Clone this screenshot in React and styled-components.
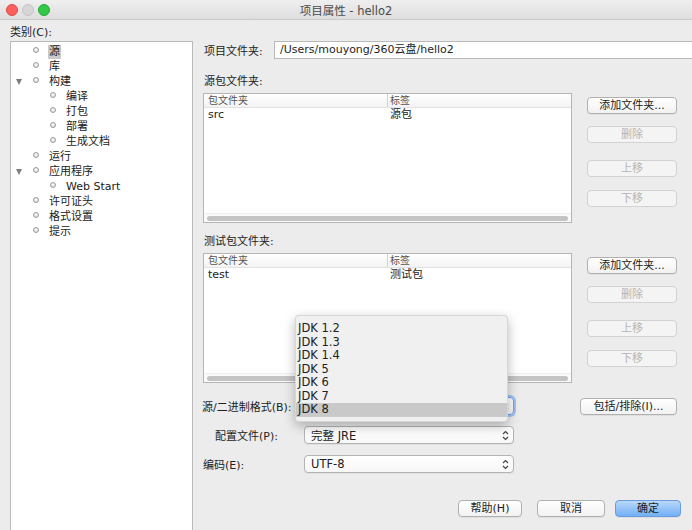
import styled, { createGlobalStyle } from "styled-components";

const FONT = `"DejaVu Sans", "Noto Sans CJK SC", sans-serif`;

const treeItems = [
  { label: "源", level: 0, selected: true },
  { label: "库", level: 0 },
  { label: "构建", level: 0, open: true },
  { label: "编译", level: 1 },
  { label: "打包", level: 1 },
  { label: "部署", level: 1 },
  { label: "生成文档", level: 1 },
  { label: "运行", level: 0 },
  { label: "应用程序", level: 0, open: true },
  { label: "Web Start", level: 1 },
  { label: "许可证头", level: 0 },
  { label: "格式设置", level: 0 },
  { label: "提示", level: 0 },
];

const jdkList = ["JDK 1.2", "JDK 1.3", "JDK 1.4", "JDK 5", "JDK 6", "JDK 7", "JDK 8"];

const sideButtons = [
  { name: "添加文件夹...", mt: 0 },
  { name: "删除", mt: 12, disabled: true },
  { name: "上移", mt: 17, disabled: true },
  { name: "下移", mt: 13, disabled: true },
];

const Arrows = () => (
  <svg width="7" height="11" viewBox="0 0 7 11">
    <path d="M1 4 L3.5 1.5 L6 4" fill="none" stroke="#444" strokeWidth="1.2" />
    <path d="M1 7 L3.5 9.5 L6 7" fill="none" stroke="#444" strokeWidth="1.2" />
  </svg>
);

const FolderSection = ({ title, mt, folder, tag }) => (
  <>
    <SectionLabel $mt={mt}>{title}</SectionLabel>
    <Section>
      <Table>
        <TableHeader>
          <HeaderCell>包文件夹</HeaderCell>
          <HeaderCell>标签</HeaderCell>
        </TableHeader>
        <TableRow>
          <Cell>{folder}</Cell>
          <Cell>{tag}</Cell>
        </TableRow>
        <ScrollTrack>
          <ScrollThumb />
        </ScrollTrack>
      </Table>
      <ButtonColumn>
        {sideButtons.map((b) => (
          <Button key={b.name} $mt={b.mt} disabled={b.disabled}>
            {b.name}
          </Button>
        ))}
      </ButtonColumn>
    </Section>
  </>
);

const App = () => {
  return (
    <>
      <GlobalStyle />
      <Window>
        <TitleBar>
          <Lights>
            <Light $color="#fc605c" $border="#de4a45" />
            <Light $color="#d6d6d6" $border="#c4c4c4" />
            <Light $color="#34c84a" $border="#22a934" />
          </Lights>
          <Title>项目属性 - hello2</Title>
          <span />
        </TitleBar>
        <Body>
          <LeftCol>
            <CategoryLabel>类别(C):</CategoryLabel>
            <TreeBox>
              {treeItems.map((item) => (
                <TreeRow key={item.label} $level={item.level}>
                  <Toggle>{item.open && <Triangle />}</Toggle>
                  <Bullet />
                  <TreeText $selected={item.selected}>{item.label}</TreeText>
                </TreeRow>
              ))}
            </TreeBox>
          </LeftCol>

          <RightCol>
            <FolderRow>
              <FieldLabel>项目文件夹:</FieldLabel>
              <TextField>/Users/mouyong/360云盘/hello2</TextField>
            </FolderRow>

            <FolderSection title="源包文件夹:" mt={16} folder="src" tag="源包" />
            <FolderSection title="测试包文件夹:" mt={12} folder="test" tag="测试包" />

            <FormGrid>
              <FormLabel $indent={-1}>源/二进制格式(B):</FormLabel>
              <Select $focused>
                {/* 当前值被弹出菜单遮住 */}
                <ArrowBox><Arrows /></ArrowBox>
                <Menu>
                  {jdkList.map((jdk) => (
                    <MenuItem key={jdk} $active={jdk === "JDK 8"}>{jdk}</MenuItem>
                  ))}
                </Menu>
              </Select>
              <SideCell>
                <Button $width={97}>包括/排除(I)...</Button>
              </SideCell>

              <FormLabel $indent={12}>配置文件(P):</FormLabel>
              <Select>
                <span>完整 JRE</span>
                <ArrowBox><Arrows /></ArrowBox>
              </Select>
              <span />

              <FormLabel>编码(E):</FormLabel>
              <Select>
                <span>UTF-8</span>
                <ArrowBox><Arrows /></ArrowBox>
              </Select>
              <span />
            </FormGrid>

            <Footer>
              <Button $width={64}>帮助(H)</Button>
              <Button $width={68} $ml={15}>取消</Button>
              <Button $width={66} $ml={10} $primary>确定</Button>
            </Footer>
          </RightCol>
        </Body>
      </Window>
    </>
  );
};

const GlobalStyle = createGlobalStyle`
  html, body {
    margin: 0;
    padding: 0;
    background: #ececec;
  }
  body {
    font-family: ${FONT};
    font-size: 11px;
    color: #222;
  }
  * {
    box-sizing: border-box;
  }
`;

const Window = styled.div`
  width: 692px;
  height: 530px;
  display: flex;
  flex-direction: column;
  overflow: hidden;
  background: #ececec;
`;

// 标题栏
const TitleBar = styled.div`
  height: 20px;
  flex-shrink: 0;
  display: grid;
  grid-template-columns: 1fr auto 1fr;
  align-items: center;
  background: linear-gradient(#efefef, #dedede);
  border-bottom: 1px solid #cbcbcb;
`;

const Lights = styled.div`
  display: flex;
  gap: 4px;
  padding-left: 6px;
`;

const Light = styled.span`
  width: 12px;
  height: 12px;
  border-radius: 50%;
  background: ${(p) => p.$color};
  border: 1px solid ${(p) => p.$border};
`;

const Title = styled.div`
  font-size: 11.5px;
  color: #4a4a4a;
`;

const Body = styled.div`
  flex: 1;
  min-height: 0;
  display: flex;
  padding-left: 10px;
`;

// 左侧类别树
const LeftCol = styled.div`
  width: 183px;
  flex-shrink: 0;
  padding-top: 6px;
  display: flex;
  flex-direction: column;
`;

const CategoryLabel = styled.div`
  line-height: 14px;
  margin-bottom: 1px;
`;

const TreeBox = styled.div`
  height: 494px;
  flex-shrink: 0;
  background: #fff;
  border: 1px solid #b9b9b9;
  padding-top: 2px;
`;

const TreeRow = styled.div`
  height: 15px;
  display: flex;
  align-items: center;
  padding-left: ${(p) => 3 + p.$level * 17}px;
`;

const Toggle = styled.span`
  width: 9px;
  display: flex;
  justify-content: center;
`;

const Triangle = styled.span`
  width: 0;
  height: 0;
  border-left: 3.5px solid transparent;
  border-right: 3.5px solid transparent;
  border-top: 6px solid #7c7c7c;
`;

const Bullet = styled.span`
  width: 6px;
  height: 6px;
  margin-left: 10px;
  margin-bottom: 4px;
  border-radius: 50%;
  border: 1px solid #9c9c9c;
  background: radial-gradient(circle at 50% 40%, #ffffff, #cfcfcf);
`;

const TreeText = styled.span`
  margin-left: 9px;
  padding: 0 1px;
  line-height: 14px;
  background: ${(p) => (p.$selected ? "#cacaca" : "transparent")};
`;

// 右侧
const RightCol = styled.div`
  flex: 1;
  display: flex;
  flex-direction: column;
  padding: 21px 15px 0 10px;
`;

const FolderRow = styled.div`
  display: flex;
  align-items: center;
  height: 18px;
  margin-right: -40px;
`;

const FieldLabel = styled.div`
  width: 71px;
  padding-left: 1px;
`;

const TextField = styled.div`
  flex: 1;
  height: 18px;
  background: #fff;
  border: 1px solid #b9b9b9;
  padding-left: 5px;
  line-height: 16px;
  font-size: 11px;
  color: #1e1e1e;
`;

const SectionLabel = styled.div`
  margin-top: ${(p) => p.$mt}px;
  margin-bottom: 4px;
  padding-left: 1px;
  line-height: 14px;
`;

const Section = styled.div`
  display: flex;
  align-items: flex-start;
`;

const Table = styled.div`
  width: 369px;
  height: 130px;
  background: #fff;
  border: 1px solid #b5b5b5;
  display: flex;
  flex-direction: column;
`;

const TableHeader = styled.div`
  height: 14px;
  display: grid;
  grid-template-columns: 183px 1fr;
  background: linear-gradient(#ffffff, #f3f3f3);
  border-bottom: 1px solid #e3e3e3;
  font-size: 10px;
  color: #555;
`;

const HeaderCell = styled.div`
  line-height: 13px;
  padding-left: 4px;
  & + & {
    border-left: 1px solid #d2d2d2;
    padding-left: 2px;
  }
`;

const TableRow = styled.div`
  height: 14px;
  display: grid;
  grid-template-columns: 183px 1fr;
`;

const Cell = styled.div`
  line-height: 14px;
  padding-left: 4px;
  & + & {
    padding-left: 3px;
  }
`;

const ScrollTrack = styled.div`
  margin-top: auto;
  height: 9px;
  padding: 2px 3px 1px;
  background: #fafafa;
  border-top: 1px solid #efefef;
`;

const ScrollThumb = styled.div`
  height: 100%;
  border-radius: 3px;
  background: #c4c4c4;
`;

const ButtonColumn = styled.div`
  margin-left: 15px;
  width: 90px;
  padding-top: 4px;
  display: flex;
  flex-direction: column;
`;

const Button = styled.button`
  width: ${(p) => (p.$width ? `${p.$width}px` : "100%")};
  height: 17px;
  margin-top: ${(p) => p.$mt || 0}px;
  margin-left: ${(p) => p.$ml || 0}px;
  padding: 0;
  font-family: ${FONT};
  font-size: 11px;
  line-height: 15px;
  color: #222;
  text-align: center;
  border-radius: 4px;
  border: 1px solid ${(p) => (p.$primary ? "#6b9ce0" : "#b1b1b1")};
  background: ${(p) =>
    p.$primary
      ? "linear-gradient(#b9d8fb, #71b0f5)"
      : "linear-gradient(#ffffff, #f2f2f2)"};
  box-shadow: 0 1px 0 rgba(0, 0, 0, 0.06);
  &:disabled {
    color: #b4b4b4;
    border-color: #d2d2d2;
    background: #f4f4f4;
    box-shadow: none;
  }
`;

// 表单
const FormGrid = styled.div`
  margin-top: 14px;
  display: grid;
  grid-template-columns: 101px 210px 1fr;
  row-gap: 11px;
  align-items: center;
`;

const FormLabel = styled.div`
  padding-left: ${(p) => (p.$indent > 0 ? p.$indent : 0)}px;
  margin-left: ${(p) => (p.$indent < 0 ? p.$indent : 0)}px;
  white-space: nowrap;
`;

const Select = styled.div`
  position: relative;
  height: 18px;
  display: flex;
  align-items: center;
  padding-left: 6px;
  font-size: 11.5px;
  background: linear-gradient(#ffffff, #f7f7f7);
  border: 1px solid ${(p) => (p.$focused ? "#6f9fe3" : "#b3b3b3")};
  border-radius: 4px;
  box-shadow: ${(p) => (p.$focused ? "0 0 0 2px #9dc1f2" : "0 1px 0 rgba(0,0,0,0.05)")};
`;

const ArrowBox = styled.span`
  margin-left: auto;
  margin-right: 4px;
  display: flex;
`;

const SideCell = styled.div`
  display: flex;
  justify-content: flex-end;
`;

const Menu = styled.div`
  position: absolute;
  left: -10px;
  top: -83px;
  width: 213px;
  height: 107px;
  padding: 6px 0;
  background: #f0f0f0;
  border: 1px solid rgba(0, 0, 0, 0.1);
  border-radius: 4px;
  box-shadow: 0 4px 12px rgba(0, 0, 0, 0.28);
  z-index: 5;
`;

const MenuItem = styled.div`
  height: 13.5px;
  line-height: 13.5px;
  padding-left: 2px;
  font-size: 11.5px;
  color: #222;
  background: ${(p) => (p.$active ? "#c9c9c9" : "transparent")};
`;

const Footer = styled.div`
  margin-top: 27px;
  margin-right: -4px;
  display: flex;
  justify-content: flex-end;
`;

export default App;
